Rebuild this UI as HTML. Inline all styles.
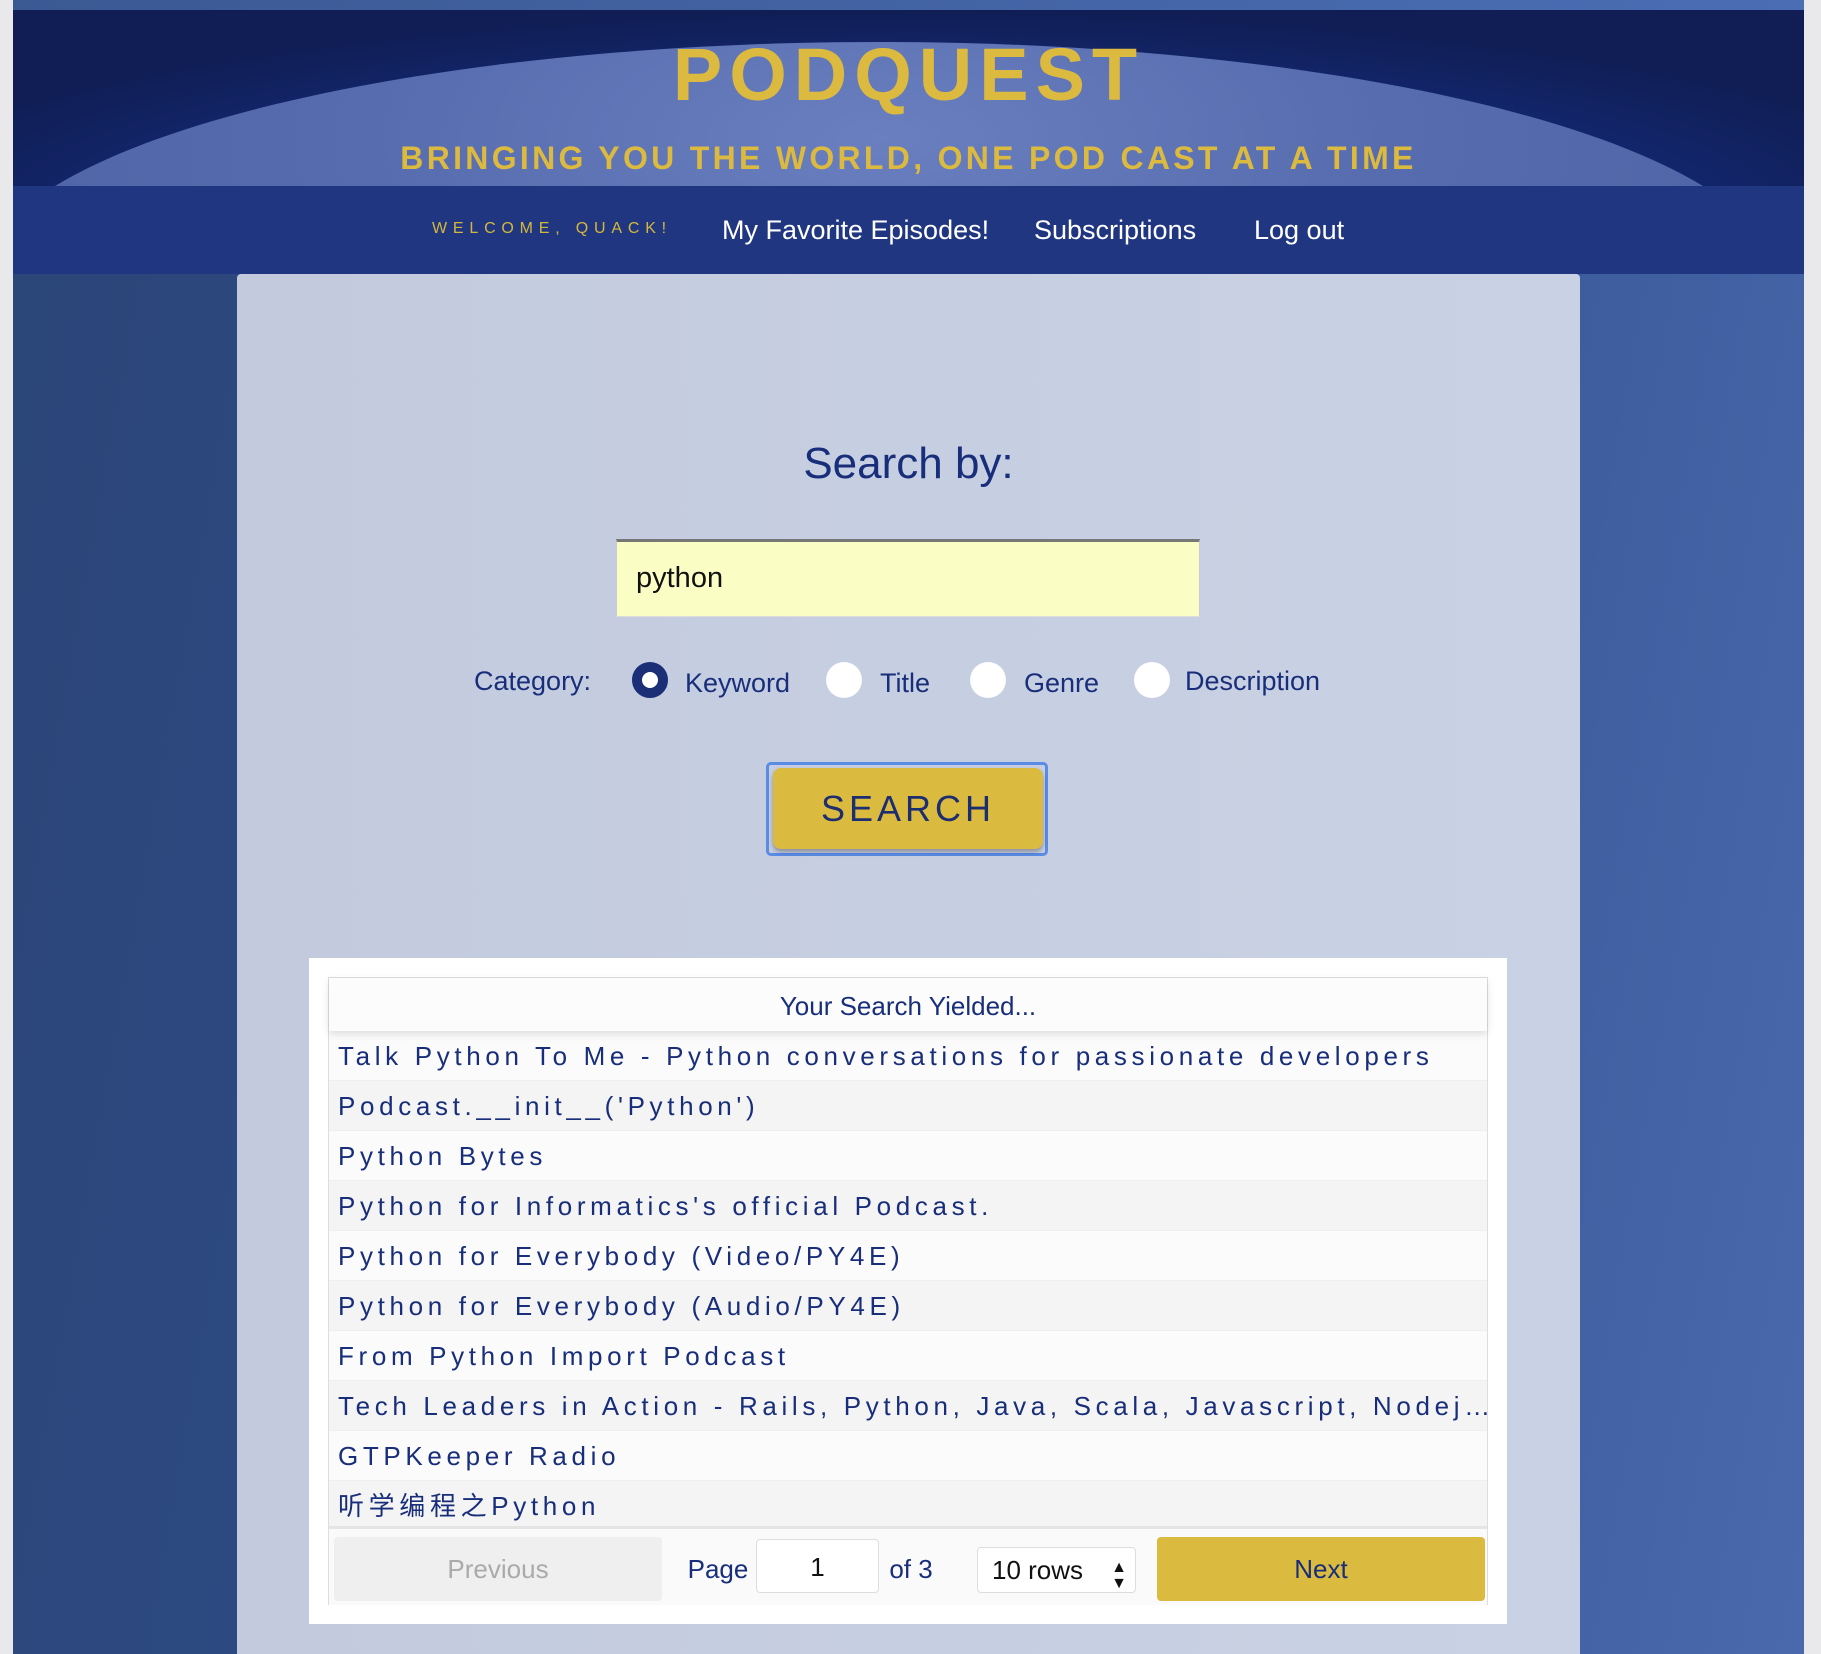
<!DOCTYPE html>
<html><head><meta charset="utf-8"><style>
*{box-sizing:border-box;margin:0;padding:0}
body{width:1821px;height:1654px;overflow:hidden;font-family:"Liberation Sans","Noto Sans CJK SC",sans-serif;background:#e9e9ec;position:relative}
#page{position:absolute;left:13px;top:0;width:1791px;height:1654px;background:linear-gradient(100deg,#2b4577 0%,#2e4e8c 50%,#4a69ad 100%)}
#topband{position:absolute;left:0;top:0;width:100%;height:10px;background:linear-gradient(90deg,#3b5993,#4a6db4)}
#header{position:absolute;left:0;top:10px;width:100%;height:176px;overflow:hidden;background:radial-gradient(ellipse 60% 120% at 50% 120%,#1e3fa0 0%,#142a78 60%,#101e55 100%)}
#earth{position:absolute;left:-34px;top:32px;width:1800px;height:482px;border-radius:50%;background:radial-gradient(ellipse at 50% 20%,#6a7fbf 0%,#566cae 40%,#4a5e9f 100%)}
#title{position:absolute;left:0;width:100%;top:22px;text-align:center;color:#dcb93f;font-weight:bold;font-size:74px;letter-spacing:7px}
#tag{position:absolute;left:0;width:100%;top:130px;text-align:center;color:#dcb93f;font-weight:bold;font-size:32px;letter-spacing:3.3px}
#nav{position:absolute;left:0;top:186px;width:100%;height:88px;background:#213681}
.nv{position:absolute;top:29px;color:#fff;font-size:27px}
#wel{position:absolute;top:34px;left:419px;color:#d4b83a;font-size:16px;letter-spacing:5.8px}
#main{position:absolute;left:237px;top:274px;width:1343px;height:1380px;background:linear-gradient(90deg,#c3cade,#c9d2e4);border-radius:4px 4px 0 0}
#sb{position:absolute;top:165px;width:100%;text-align:center;color:#182e7a;font-size:44px}
#inp{position:absolute;left:379px;top:265px;width:584px;height:78px;background:#fbfec4;border-top:3px solid #777;border-left:1px solid #ccc;border-right:1px solid #ccc;border-bottom:1px solid #ddd;font-size:29px;padding:20px 0 0 19px;color:#111}
.cat{position:absolute;top:392px;color:#182e7a;font-size:27px}
.rad{position:absolute;top:388px;width:36px;height:36px;border-radius:50%;background:#fff}
.rad.on{background:#fff;border:10px solid #1b2e78}
#btnring{position:absolute;left:529px;top:488px;width:282px;height:94px;border:3px solid #5a8ce6;border-radius:5px}
#btn{position:absolute;left:536px;top:494px;width:270px;height:81px;background:#dbbb3f;border-radius:8px;box-shadow:0 3px 5px rgba(0,0,0,.3);text-align:center;color:#1c2e70;font-size:36px;letter-spacing:4px;line-height:81px}
#card{position:absolute;left:309px;top:958px;width:1198px;height:666px;background:#fff}
#tbl{position:absolute;left:328px;top:977px;width:1160px;height:628px;border:1px solid #ddd;background:#fafafa}
#th{height:53px;text-align:center;color:#182e7a;font-size:26px;line-height:56px;box-shadow:0 3px 8px rgba(0,0,0,.12);position:relative;background:#fcfcfc}
.r{height:50px;line-height:50px;padding-left:9px;color:#182e7a;font-size:26px;letter-spacing:4.65px;border-bottom:1px solid #eee;white-space:nowrap;overflow:hidden}
.r:nth-child(even){background:#f4f4f4}
.r:nth-child(odd){background:#fbfbfb}
#pg{position:absolute;left:0;top:548px;width:100%;height:79px;border-top:3px solid #e4e4e4;background:#fafafa}
.pb{position:absolute;top:8px;height:64px;border-radius:4px;text-align:center;line-height:64px;font-size:26px}
</style></head><body>
<div id="page">
<div id="topband"></div>
<div id="header"><div id="earth"></div>
<div id="title">PODQUEST</div>
<div id="tag">BRINGING YOU THE WORLD, ONE POD CAST AT A TIME</div></div>
<div id="nav"><div id="wel">WELCOME, QUACK!</div>
<div class="nv" style="left:709px">My Favorite Episodes!</div>
<div class="nv" style="left:1021px">Subscriptions</div>
<div class="nv" style="left:1241px">Log out</div></div>
</div>
<div id="main">
<div id="sb">Search by:</div>
<div id="inp">python</div>
<div class="cat" style="left:237px">Category:</div>
<div class="rad on" style="left:395px"></div><div class="cat" style="left:448px;top:394px">Keyword</div>
<div class="rad" style="left:589px"></div><div class="cat" style="left:643px;top:394px">Title</div>
<div class="rad" style="left:733px"></div><div class="cat" style="left:787px;top:394px">Genre</div>
<div class="rad" style="left:897px"></div><div class="cat" style="left:948px">Description</div>
<div id="btnring"></div><div id="btn">SEARCH</div>
</div>
<div id="card"></div>
<div id="tbl">
<div id="th">Your Search Yielded...</div>
<div>
<div class="r">Talk Python To Me - Python conversations for passionate developers</div>
<div class="r">Podcast.__init__('Python')</div>
<div class="r">Python Bytes</div>
<div class="r">Python for Informatics's official Podcast.</div>
<div class="r">Python for Everybody (Video/PY4E)</div>
<div class="r">Python for Everybody (Audio/PY4E)</div>
<div class="r">From Python Import Podcast</div>
<div class="r">Tech Leaders in Action - Rails, Python, Java, Scala, Javascript, Nodej…</div>
<div class="r">GTPKeeper Radio</div>
<div class="r">听学编程之Python</div>
</div>
<div id="pg">
<div class="pb" style="left:5px;width:328px;background:#efefef;color:#aaa">Previous</div>
<div class="pb" style="left:354px;width:70px;color:#182e7a">Page</div>
<div class="pb" style="left:427px;width:123px;top:10px;height:54px;line-height:54px;background:#fff;border:1px solid #ddd;color:#111">1</div>
<div class="pb" style="left:556px;width:52px;color:#182e7a">of 3</div>
<div class="pb" style="left:648px;width:159px;top:18px;height:46px;line-height:44px;background:#fff;border:1px solid #ddd;color:#111;text-align:left;padding-left:14px">10 rows<span style="position:absolute;right:8px;top:-2px;font-size:16px;line-height:16px;padding-top:14px">▲<br>▼</span></div>
<div class="pb" style="left:828px;width:328px;background:#dbbb3f;color:#182e7a">Next</div>
</div>
</div>
</body></html>
